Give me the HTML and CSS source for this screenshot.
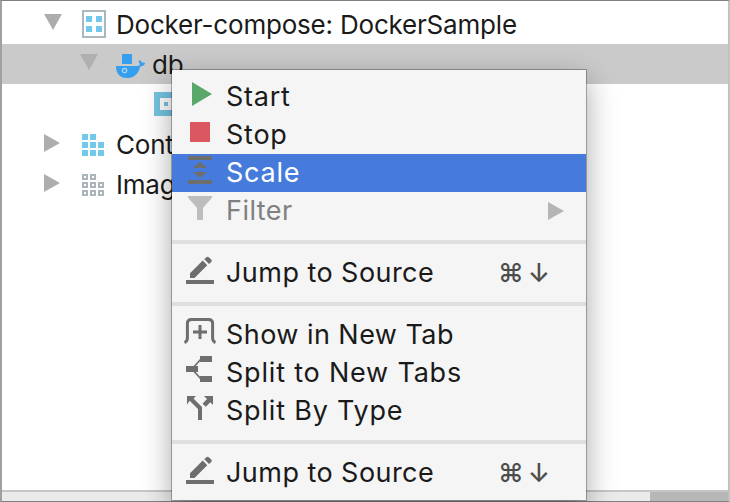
FILE: index.html
```html
<!DOCTYPE html>
<html lang="en">
<head>
<meta charset="utf-8">
<title>Docker services</title>
<link rel="stylesheet" href="styles.css">
</head>
<body>
<svg class="defs" aria-hidden="true">
  <symbol id="edit" viewBox="0 0 54 38"><path d="M14 26h28v4H14zM18 19.300 30.700 6.600 35.300 11.200 22.500 24H18zM32.300 5.300l2-2q1.300-1.300 2.600 0l2.400 2.300q1 1.200 0 2.300l-2.300 2z"/></symbol>
</svg>
<div class="window">
  <div class="tree">
    <div class="row">
      <svg class="arrow" viewBox="0 0 18 40"><path d="M0 10h18L9 26z"/></svg>
      <svg class="icon" viewBox="0 0 28 40"><path d="M3 7h22v26H3z" fill="#fff" stroke="#aab7bf" stroke-width="2"/><path d="M6 12h6v6H6zm10 0h6v6h-6zM6 22h6v6H6zm10 0h6v6h-6z" fill="#72c9e9"/></svg>
      <span class="name">Docker-compose: DockerSample</span>
    </div>
    <div class="row child selected">
      <svg class="arrow" viewBox="0 0 18 40"><path d="M0 10h18L9 26z"/></svg>
      <svg class="icon" viewBox="2 0 32 40"><path d="M8 10h10v10H8zM2 22h21.500q2.500 0 2.300-2-2-2-.5-4 2 .6 2.500 2.500 2-.2 3.500.4-1 3-5 3.500C24 31 19 34 13 34 6 34 2 30 2 22z" fill="#369ff0"/><circle cx="10.500" cy="26.500" r="2.200" fill="none" stroke="#b3d5ef" stroke-width="1.200"/></svg>
      <span class="name">db</span>
    </div>
    <div class="row grandchild">
      <svg class="icon" viewBox="0 0 28 40"><path d="M0 8h24v24H0zM6 14v12h12V14zM10 18h4v4h-4z" fill="#74c5e3" fill-rule="evenodd"/></svg>
    </div>
    <div class="row">
      <svg class="arrow" viewBox="0 0 18 40"><path d="M0 10l16 9-16 9z"/></svg>
      <svg class="icon" viewBox="0 0 28 40"><path d="M2 10h6v6H2zm8 0h6v6h-6zM2 18h6v6H2zm8 0h6v6h-6zm8 0h6v6h-6zM2 26h6v6H2zm8 0h6v6h-6zm8 0h6v6h-6z" fill="#72c9e9"/></svg>
      <span class="name">Cont</span>
    </div>
    <div class="row">
      <svg class="arrow" viewBox="0 0 18 40"><path d="M0 10l16 9-16 9z"/></svg>
      <svg class="icon" viewBox="0 0 28 40"><path d="M3 11h4v4H3zm8 0h4v4h-4zM3 19h4v4H3zm8 0h4v4h-4zm8 0h4v4h-4zM3 27h4v4H3zm8 0h4v4h-4zm8 0h4v4h-4z" fill="none" stroke="#aab5bc" stroke-width="2"/></svg>
      <span class="name">Imag</span>
    </div>
  </div>
  <div class="scrollbar"><div class="thumb"></div></div>
</div>
<div class="menu">
  <div class="item short"><svg viewBox="0 0 54 38"><path d="M20 4l20 12-20 12z" fill="#59a869"/></svg><span>Start</span></div>
  <div class="item short"><svg viewBox="0 0 54 38"><path d="M18 6h20v20H18z" fill="#db5860"/></svg><span>Stop</span></div>
  <div class="item short active"><svg viewBox="0 0 54 38"><path d="M16 2h24v4H16zM16 26h24v4H16zM28 8l7 6H21zM28 24l7-6H21z"/></svg><span>Scale</span></div>
  <div class="item disabled"><svg viewBox="0 0 54 38"><path d="M16 4h24v1.500L31 16v12h-6V16L16 5.500z"/></svg><span>Filter</span><svg class="sub" viewBox="0 0 18 38"><path d="M0 10l16 9-16 9z"/></svg></div>
  <div class="separator"></div>
  <div class="item"><svg><use href="#edit"/></svg><span>Jump to Source</span><kbd><span>⌘</span><span>↓</span></kbd></div>
  <div class="separator"></div>
  <div class="item"><svg viewBox="0 0 54 38"><path d="M12.500 26.500q2.900-1 2.900-4.500V7.500q0-4 4-4h17.200q4 0 4 4V22q0 3.500 2.900 4.500M28 9v14M21 16h14" fill="none" stroke="#6e6e6e" stroke-width="3"/></svg><span>Show in New Tab</span></div>
  <div class="item split"><svg viewBox="0 0 54 38"><path d="M28 2h12v6H28zM14 12h12v6H14zM28 22h12v6H28z"/><path d="M29 5l-9 10 9 10" fill="none" stroke="#6e6e6e" stroke-width="1.700"/></svg><span>Split to New Tabs</span></div>
  <div class="item split"><svg viewBox="0 0 54 38"><path d="M15 4h9l-2.500 2.500L30 15v13h-4V17l-8.300-8.300L15 12.500zM32 4h9v9l-2.700-2.700-4.500 4.500-3.300-3 4.500-4.800z"/></svg><span>Split By Type</span></div>
  <div class="separator"></div>
  <div class="item"><svg><use href="#edit"/></svg><span>Jump to Source</span><kbd><span>⌘</span><span>↓</span></kbd></div>
</div>
</body>
</html>
```
FILE: styles.css
```css
* { box-sizing: border-box; }
body { margin: 0; width: 730px; height: 502px; overflow: hidden; font: 26px/40px Inter, "Liberation Sans", sans-serif; letter-spacing: -.2px; color: #1a1a1a; }
.defs { position: absolute; width: 0; height: 0; }
.window { display: flex; flex-direction: column; width: 730px; height: 502px; border: solid; border-width: 1px 2px 1px 2px; border-color: #808080 #c2c2c2 #808080 #a0a0a0; background: #fff; }
.tree { flex: 1; padding-top: 3px; }
.row { display: flex; height: 40px; padding-left: 42px; white-space: nowrap; }
.child { padding-left: 78px; }
.grandchild { padding-left: 152px; }
.selected { background: #cacaca; }
.arrow { width: 18px; height: 40px; margin-right: 18px; fill: #adadad; }
.selected .arrow { fill: #b0b0b0; }
.icon { flex: none; height: 40px; width: 28px; margin-right: 8px; }
.selected .icon { width: 32px; margin-right: 4px; }
.name { padding-top: 1px; }
.scrollbar { display: flex; justify-content: flex-end; height: 11px; border-top: 2px solid #c6c6c6; background: #ebebeb; }
.thumb { width: 78px; background: #b7b7b7; }
.menu { position: absolute; left: 172px; top: 70px; width: 414px; height: 430px; padding: 8px 0; font-size: 27px; letter-spacing: .45px; background: #f5f5f5; box-shadow: 0 0 0 1px rgba(0,0,0,.28), 0 10px 28px rgba(0,0,0,.36); }
.item { display: flex; height: 38px; line-height: 38px; white-space: nowrap; }
.item svg { flex: none; width: 54px; height: 38px; fill: #6e6e6e; }
.short { letter-spacing: .75px; }
.split { letter-spacing: .8px; }
.active { background: #467bdc; color: #fff; }
.disabled { color: #808080; }
.disabled svg { fill: #bdbdbd; }
.item .sub { width: 18px; margin: 0 20px 0 auto; fill: #b5b5b5; }
kbd { display: flex; gap: 4px; margin: 0 36px 0 auto; font: inherit; font-size: 26px; font-weight: 500; letter-spacing: 0; color: #4d4d4d; }
.separator { height: 24px; border: solid #f5f5f5; border-width: 10px 0; background: #dfdfdf; }
```
